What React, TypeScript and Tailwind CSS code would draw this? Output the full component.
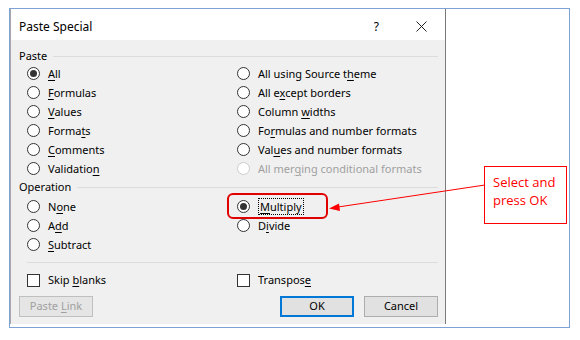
import React from 'react';

type Opt = { pre: string; key: string; post: string; checked?: boolean; disabled?: boolean; focus?: boolean };

const font = { fontFamily: '"Noto Sans", "Open Sans", sans-serif' };

function Label({ o }: { o: Opt }) {
  return (
    <span>
      {o.pre}
      <span className="underline underline-offset-2">{o.key}</span>
      {o.post}
    </span>
  );
}

function Radio({ o }: { o?: Opt }) {
  if (!o) return <div className="h-[19px]" />;
  return (
    <div className={`flex items-center h-[19px] ${o.disabled ? 'text-[#a0a0a0]' : 'text-black'}`}>
      <span
        className={`w-[13px] h-[13px] rounded-full border bg-white flex items-center justify-center shrink-0 ${
          o.disabled ? 'border-[#cccccc]' : 'border-[#333333]'
        }`}
      >
        {o.checked && <span className="w-[7px] h-[7px] rounded-full bg-[#333333]" />}
      </span>
      <span className={`ml-[8px] leading-[15px] ${o.focus ? 'border border-dotted border-black px-[1px]' : ''}`}>
        <Label o={o} />
      </span>
    </div>
  );
}

function Check({ o }: { o: Opt }) {
  return (
    <div className="flex items-center h-[19px]">
      <span className="w-[13px] h-[13px] border border-[#333333] bg-white shrink-0" />
      <span className="ml-[8px]">
        <Label o={o} />
      </span>
    </div>
  );
}

function Group({ title }: { title: string }) {
  return (
    <div className="flex items-center h-[16px] pr-[7px]">
      <span>{title}</span>
      <span className="flex-1 ml-[6px] h-px bg-[#dcdcdc]" />
    </div>
  );
}

const pasteLeft: Opt[] = [
  { pre: '', key: 'A', post: 'll', checked: true },
  { pre: '', key: 'F', post: 'ormulas' },
  { pre: '', key: 'V', post: 'alues' },
  { pre: 'Forma', key: 't', post: 's' },
  { pre: '', key: 'C', post: 'omments' },
  { pre: 'Validatio', key: 'n', post: '' },
];

const pasteRight: Opt[] = [
  { pre: 'All using Source t', key: 'h', post: 'eme' },
  { pre: 'All e', key: 'x', post: 'cept borders' },
  { pre: 'Column ', key: 'w', post: 'idths' },
  { pre: 'Fo', key: 'r', post: 'mulas and number formats' },
  { pre: 'Val', key: 'u', post: 'es and number formats' },
  { pre: 'All mer', key: 'g', post: 'ing conditional formats', disabled: true },
];

const opLeft: Opt[] = [
  { pre: 'N', key: 'o', post: 'ne' },
  { pre: 'A', key: 'd', post: 'd' },
  { pre: '', key: 'S', post: 'ubtract' },
];

const opRight: Opt[] = [
  { pre: '', key: 'M', post: 'ultiply', checked: true, focus: true },
  { pre: 'D', key: 'i', post: 'vide' },
];

export default function App() {
  return (
    <div className="relative w-[580px] h-[340px] bg-white text-[11px] text-black overflow-hidden" style={font}>
      <div className="ml-[9px] mt-[8px] w-[561px] h-[320px] border border-[#7ea1d6] flex">
        <div className="w-[436px] h-[315px] border-l border-l-[#a8a8a8] border-r border-r-[#7a7a7a] flex flex-col">
          <div className="h-[31px] bg-white flex items-center pl-[8px] pt-[4px]">
            <span className="text-[12px]">Paste Special</span>
            <span className="ml-auto mr-[37px] text-[12px]">?</span>
            <svg width="11" height="11" viewBox="0 0 11 11" className="mr-[18px]">
              <path d="M0.5 0.5 L10.5 10.5 M10.5 0.5 L0.5 10.5" stroke="#222" strokeWidth="1" />
            </svg>
          </div>
          <div className="flex-1 bg-[#f0f0f0] pl-[8px] pt-[8px]">
            <Group title="Paste" />
            <div className="pl-[8px] grid grid-cols-[210px_1fr]">
              {pasteLeft.map((o, i) => (
                <React.Fragment key={o.pre + o.key + o.post}>
                  <Radio o={o} />
                  <Radio o={pasteRight[i]} />
                </React.Fragment>
              ))}
            </div>
            <div className="mt-[1px]">
              <Group title="Operation" />
            </div>
            <div className="pl-[8px] mt-[2px] grid grid-cols-[210px_1fr]">
              {opLeft.map((o, i) => (
                <React.Fragment key={o.pre + o.key + o.post}>
                  <Radio o={o} />
                  <Radio o={opRight[i]} />
                </React.Fragment>
              ))}
            </div>
            <div className="ml-[8px] mr-[7px] mt-[8px] h-px bg-[#dcdcdc]" />
            <div className="pl-[8px] mt-[8px] grid grid-cols-[210px_1fr]">
              <Check o={{ pre: 'Skip ', key: 'b', post: 'lanks' }} />
              <Check o={{ pre: 'Transpos', key: 'e', post: '' }} />
            </div>
            <div className="mt-[6px] flex items-center pr-[7px]">
              <button className="w-[74px] h-[21px] border border-[#bfbfbf] bg-[#e5e5e5] text-[#a0a0a0]">
                Paste <span className="underline underline-offset-2">L</span>ink
              </button>
              <button className="ml-auto w-[74px] h-[21px] border-2 border-[#0078d7] bg-[#e1e1e1]">OK</button>
              <button className="ml-[10px] w-[74px] h-[21px] border border-[#adadad] bg-[#e1e1e1]">Cancel</button>
            </div>
          </div>
        </div>
      </div>

      {/* annotation: red box around Multiply */}
      <div className="absolute left-[227px] top-[193px] w-[101px] h-[26px] border-2 border-[#e00000] rounded-[6px]" />

      {/* arrow */}
      <svg className="absolute left-0 top-0" width="580" height="340">
        <line x1="338" y1="207" x2="485" y2="185" stroke="#ff0000" strokeWidth="1" />
        <polygon points="329,208.5 339,203.5 340,211" fill="#ff0000" />
      </svg>

      {/* callout */}
      <div
        className="absolute left-[484px] top-[166px] w-[83px] h-[58px] border border-[#ff0000] bg-white text-[#ff0000] text-[13px] leading-[18px] pl-[8px] pt-[6px]"
        style={{ fontFamily: '"Open Sans", sans-serif' }}
      >
        Select and
        <br />
        press OK
      </div>
    </div>
  );
}
